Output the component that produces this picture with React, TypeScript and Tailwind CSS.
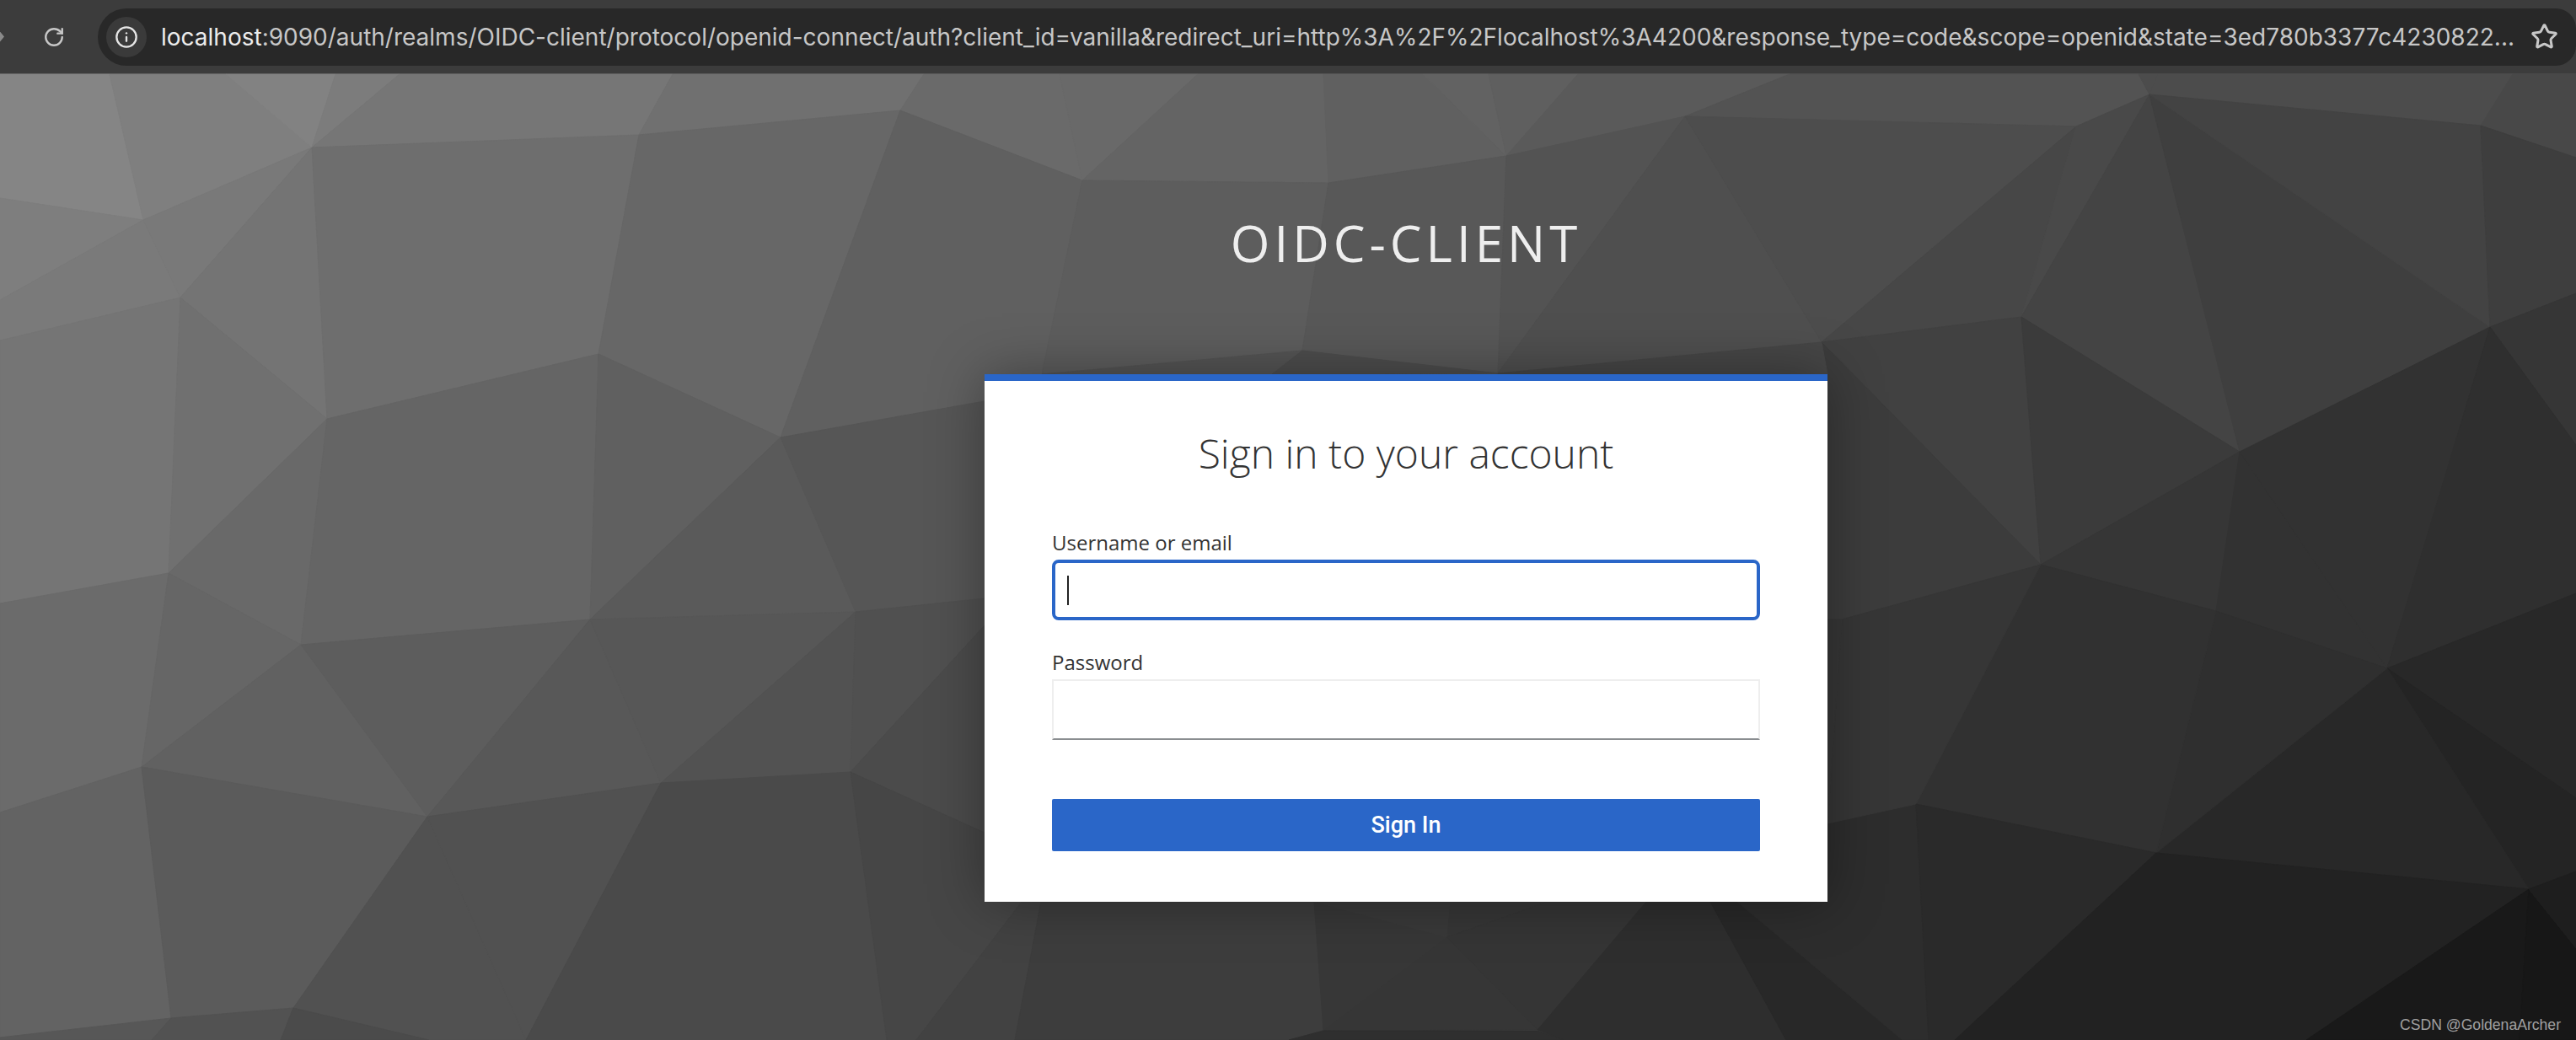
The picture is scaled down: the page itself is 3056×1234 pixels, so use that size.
import { Info, RotateCw, Star } from "lucide-react";

// low-poly backdrop: [points, grey]
const facets: [string, string][] = [
  ["0,88 130,88 170,261 0,235", "#868686"],
  ["130,88 268,88 370,175 170,261", "#7e7e7e"],
  ["268,88 398,88 370,175", "#838383"],
  ["398,88 474,88 370,175", "#7b7b7b"],
  ["474,88 798,88 758,160 370,175", "#747474"],
  ["798,88 1096,88 1068,131 758,160", "#6e6e6e"],
  ["1096,88 1257,88 1284,214 1068,131", "#686868"],
  ["0,235 170,261 0,356", "#7e7e7e"],
  ["0,356 170,261 214,353 0,404", "#7a7a7a"],
  ["170,261 370,175 214,353", "#787878"],
  ["370,175 388,497 214,353", "#727272"],
  ["370,175 758,160 710,420 388,497", "#6b6b6b"],
  ["758,160 1068,131 926,519 710,420", "#646464"],
  ["1068,131 1284,214 1236,444 1168,476 926,519", "#5d5d5d"],
  ["0,404 214,353 200,680 0,716", "#767676"],
  ["214,353 388,497 200,680", "#6f6f6f"],
  ["388,497 357,765 200,680", "#686868"],
  ["388,497 710,420 700,735 357,765", "#636363"],
  ["710,420 926,519 700,735", "#5e5e5e"],
  ["926,519 1015,726 700,735", "#585858"],
  ["926,519 1168,476 1168,710 1015,726", "#525252"],
  ["0,716 200,680 168,910 0,964", "#6d6d6d"],
  ["200,680 357,765 168,910", "#666666"],
  ["357,765 507,969 168,910", "#626262"],
  ["357,765 700,735 507,969", "#5c5c5c"],
  ["700,735 784,929 507,969", "#585858"],
  ["700,735 1015,726 784,929", "#555555"],
  ["1015,726 1009,916 784,929", "#505050"],
  ["1015,726 1168,710 1168,742 1009,916", "#4e4e4e"],
  ["1009,916 1168,742 1168,988", "#484848"],
  ["0,964 168,910 203,1208 0,1231", "#666666"],
  ["168,910 507,969 348,1196 203,1208", "#5c5c5c"],
  ["507,969 624,1234 509,1234 348,1196", "#515151"],
  ["507,969 784,929 624,1234", "#505050"],
  ["784,929 1009,916 1052,1234 624,1234", "#494949"],
  ["1009,916 1168,988 1212,1070 1087,1234 1052,1234", "#454545"],
  ["0,1231 203,1208 180,1234 0,1234", "#585858"],
  ["203,1208 348,1196 333,1234 180,1234", "#525252"],
  ["348,1196 509,1234 333,1234", "#484848"],
  ["1087,1234 1212,1070 1235,1070 1204,1234", "#424242"],
  ["1204,1234 1235,1070 1559,1070 1570,1223 1529,1234", "#3c3c3c"],
  ["1559,1070 1717,1112 1570,1223", "#343434"],
  ["1559,1070 1721,1070 1717,1112", "#373737"],
  ["1721,1070 1836,1070 1717,1112", "#333333"],
  ["1717,1112 1824,1222 1570,1223", "#363636"],
  ["1717,1112 1836,1070 1953,1070 1824,1222", "#333333"],
  ["1529,1234 1570,1223 1824,1223 1855,1234", "#2c2c2c"],
  ["1824,1222 1953,1070 2029,1070 2119,1234 1855,1234", "#2b2b2b"],
  ["2029,1070 2061,1070 2257,1234 2119,1234", "#242424"],
  ["2061,1070 2168,977 2273,954 2288,1234 2257,1234", "#2b2b2b"],
  ["1257,88 1421,88 1284,214", "#686868"],
  ["1421,88 1570,88 1576,217 1284,214", "#626262"],
  ["1570,88 1688,88 1787,185 1576,217", "#5e5e5e"],
  ["1688,88 1766,88 1787,185", "#626262"],
  ["1766,88 1872,88 1787,185", "#5e5e5e"],
  ["1872,88 2123,88 1999,138 1787,185", "#585858"],
  ["2123,88 2537,88 2550,112 2463,150 1999,138", "#505050"],
  ["2537,88 2560,88 2550,112", "#484848"],
  ["2560,88 2981,88 2943,149 2550,112", "#4a4a4a"],
  ["2981,88 3056,88 3056,187 2943,149", "#484848"],
  ["1284,214 1576,217 1545,416 1236,444", "#5a5a5a"],
  ["1576,217 1787,185 1777,443 1545,416", "#555555"],
  ["1787,185 1999,138 1777,443", "#4f4f4f"],
  ["1999,138 2161,406 1777,443", "#4b4b4b"],
  ["1999,138 2463,150 2161,406", "#484848"],
  ["2463,150 2398,376 2161,406", "#434343"],
  ["2463,150 2550,112 2398,376", "#454545"],
  ["2550,112 2657,536 2398,376", "#414141"],
  ["2550,112 2954,388 2657,536", "#3c3c3c"],
  ["2550,112 2943,149 2954,388", "#3f3f3f"],
  ["2943,149 3056,187 3056,348 2954,388", "#3b3b3b"],
  ["2161,406 2398,376 2421,670", "#3d3d3d"],
  ["2398,376 2657,536 2421,670", "#363636"],
  ["2161,406 2421,670 2185,735 2161,735", "#383838"],
  ["2421,670 2657,536 2629,725", "#333333"],
  ["2657,536 2832,793 2629,725", "#2f2f2f"],
  ["2657,536 2954,388 2832,793", "#2d2d2d"],
  ["2954,388 3056,348 3056,528", "#333333"],
  ["2954,388 3056,528 3056,704 2832,793", "#2b2b2b"],
  ["2832,793 3056,704 3056,947", "#262626"],
  ["2832,793 3056,947 3056,1034 3000,1055", "#222222"],
  ["2832,793 3000,1055 2558,1012", "#272727"],
  ["2629,725 2832,793 2558,1012", "#2d2d2d"],
  ["2421,670 2629,725 2558,1012 2273,954", "#2e2e2e"],
  ["2185,735 2421,670 2273,954 2168,977", "#343434"],
  ["2160,735 2185,735 2168,977 2160,977", "#343434"],
  ["2273,954 2558,1012 2319,1234 2288,1234", "#292929"],
  ["2558,1012 3000,1055 2736,1234 2319,1234", "#202020"],
  ["3000,1055 2989,1234 2736,1234", "#161616"],
  ["3000,1055 3056,1125 3056,1234 2989,1234", "#131313"],
  ["3000,1055 3056,1034 3056,1125", "#1c1c1c"],
  ["1236,444 1545,416 1509,444", "#505050"],
  ["1545,416 1777,443 1509,444", "#464646"],
  ["1777,443 2161,406 2168,444 1777,444", "#404040"],
];

// pull each facet part way to the overall corner-to-corner falloff, the facets read softer that way
const soften = (points: string, grey: string) => {
  const pts = points.split(" ").map((p) => p.split(",").map(Number));
  const cx = pts.reduce((s, p) => s + p[0], 0) / pts.length;
  const cy = pts.reduce((s, p) => s + p[1], 0) / pts.length;
  const plane = 136 - 0.0203 * cx - 0.042 * (cy - 88);
  const v = Math.round(parseInt(grey.slice(1, 3), 16) * 0.65 + plane * 0.35);
  return `rgb(${v},${v},${v})`;
};

const BrowserBar = () => (
  <div className="h-[89px] bg-[#3c3c3c] border-b-2 border-[#484848] flex items-center font-['Inter',sans-serif]">
    <div className="w-[116px] flex items-center shrink-0">
      <span className="w-[5px] h-[12px] bg-[#8a8a8a] [clip-path:polygon(0_0,100%_50%,0_100%)]" />
      <RotateCw className="ml-[46px] w-[26px] h-[26px] text-[#c7c7c7]" strokeWidth={2.2} />
    </div>
    <div className="flex-1 h-[68px] rounded-l-[34px] rounded-r-[24px] bg-[#282828] flex items-center pl-[10px] min-w-0">
      <div className="w-[48px] h-[48px] rounded-full bg-[#3a3a3a] flex items-center justify-center shrink-0">
        <Info className="w-[28px] h-[28px] text-[#e6e6e6]" strokeWidth={2} />
      </div>
      <div className="ml-[17px] w-[2790px] text-[28px] leading-none text-[#c7c7c7] whitespace-nowrap shrink-0">
        <span className="text-[#ececec]">localhost</span>
        :9090/auth/realms/OIDC-client/protocol/openid-connect/auth?client_id=vanilla&amp;redirect_uri=http%3A%2F%2Flocalhost%3A4200&amp;response_type=code&amp;scope=openid&amp;state=3ed780b3377c4230822...
      </div>
      <Star className="ml-[21px] w-[33px] h-[33px] text-[#c7c7c7] shrink-0" strokeWidth={2.2} />
    </div>
  </div>
);

const App = () => (
  <div className="w-[3056px] h-[1234px] overflow-hidden bg-[#555555] font-['Open_Sans',sans-serif]">
    <BrowserBar />
    <main className="relative h-[1145px] pl-[280px] flex flex-col items-center">
      <svg className="absolute left-0 top-[-89px] w-[3056px] h-[1234px]" viewBox="0 0 3056 1234">
        {facets.map(([points, grey]) => {
          const fill = soften(points, grey);
          return <polygon key={points} points={points} fill={fill} stroke={fill} strokeWidth={1} />;
        })}
      </svg>

      <h1 className="relative mt-[159px] h-[80px] leading-[80px] text-[60px] font-normal uppercase tracking-[5px] text-[#eeeeee]">
        OIDC-client
      </h1>

      <div className="relative mt-[116px] w-[1000px] h-[626px] bg-white border-t-8 border-[#2a66c8] shadow-[0_0_60px_rgba(0,0,0,0.35)] px-20 text-[#333333]">
        <h2 className="pt-[50px] h-[180px] text-center text-[48px] leading-[72px] font-light">Sign in to your account</h2>

        <label className="block h-[32px] text-[24px] leading-[24px]">Username or email</label>
        <div className="h-[72px] border-4 border-[#2a66c8] rounded-[8px] flex items-center pl-[14px]">
          <span className="w-[2px] h-[35px] bg-[#222222]" />
        </div>

        <label className="block mt-[38px] h-[32px] text-[24px] leading-[24px]">Password</label>
        <div className="h-[72px] border-2 border-[#eeeeee] border-b-[#8a8d90]" />

        <button className="mt-[70px] w-full h-[62px] rounded-[2px] bg-[#2a66c8] text-white text-[27px] font-medium font-['Roboto',sans-serif]">
          Sign In
        </button>
      </div>

      <span className="absolute right-[18px] bottom-[6px] text-[17.6px] leading-[24px] text-[#a0a0a0] font-['Liberation_Sans',sans-serif]">
        CSDN @GoldenaArcher
      </span>
    </main>
  </div>
);

export default App;
